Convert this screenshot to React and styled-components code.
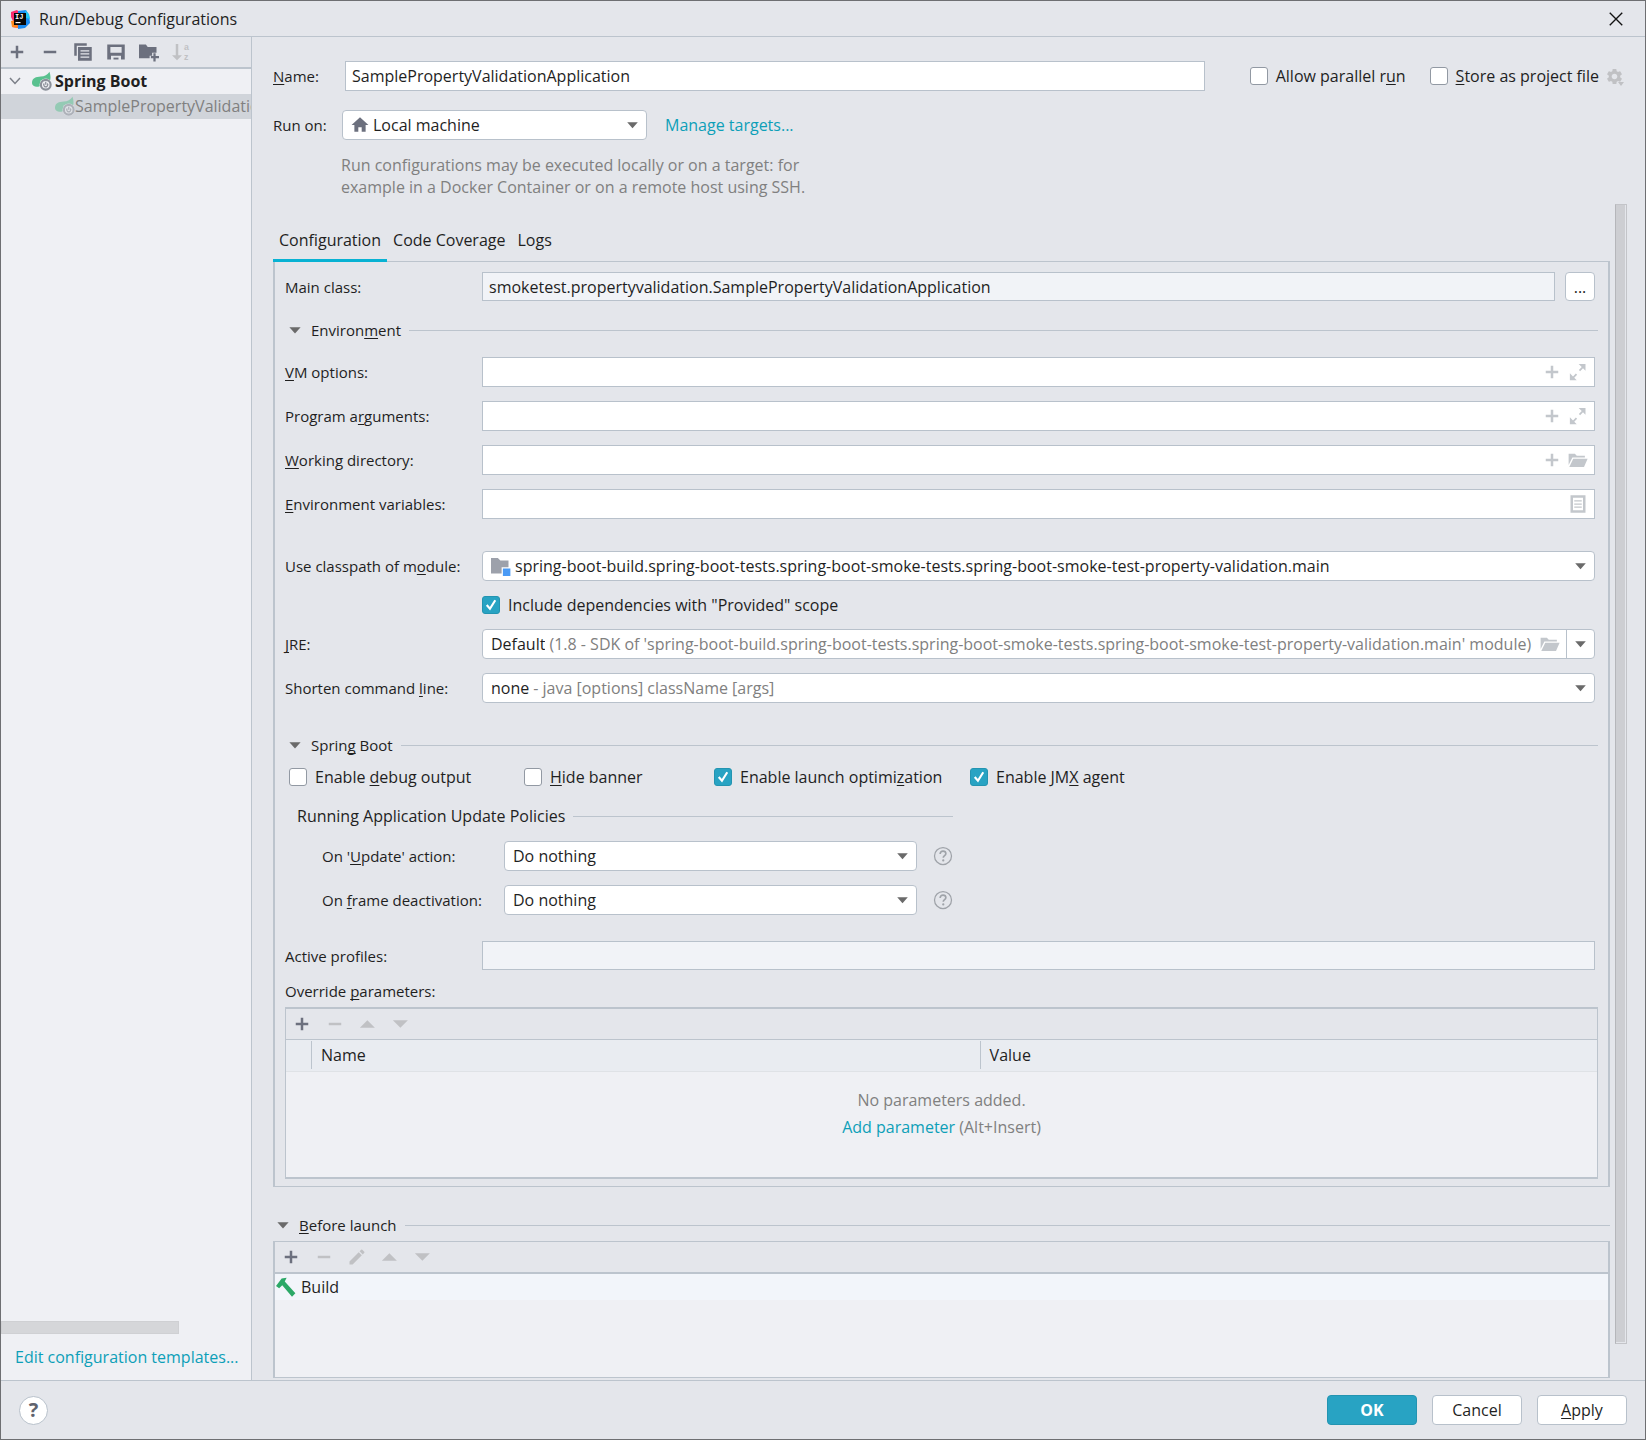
import React from 'react'
import styled, { createGlobalStyle, css } from 'styled-components'
import { MdEdit, MdSettings } from 'react-icons/md'

const GlobalStyle = createGlobalStyle`
* {
    box-sizing: border-box;
}
body {
    margin: 0;
    background-color: #e4e6eb;
    color: #1f1f1f;
    font-family: "Open Sans", "Noto Sans", sans-serif;
    font-size: 16px;
    line-height: 22px;
}
button, input, select {
    font: inherit;
    color: inherit;
}
u {
    text-decoration-thickness: 1px;
    text-underline-offset: 2px;
    text-decoration-skip-ink: none;
}
`

/* ---------- icons ---------- */

function Icon({ children, color = '#6c707e', size = 20 }) {
    return (
        <svg width={size} height={size} viewBox="0 0 16 16" fill={color} aria-hidden="true">
            {children}
        </svg>
    )
}

const GREY = '#c0c1c4'

const PlusIcon = ({ color }) => <Icon color={color}><path d="M7 3h2v4h4v2H9v4H7V9H3V7h4z" /></Icon>
const MinusIcon = ({ color }) => <Icon color={color}><path d="M3 7h10v2H3z" /></Icon>
const UpIcon = () => <Icon color={GREY}><path d="M1.500 11l6-6 6 6z" /></Icon>
const DownIcon = () => <Icon color={GREY}><path d="M1.500 5h12l-6 6z" /></Icon>
const ArrowIcon = () => <Icon color="#6a6a6a"><path d="M3 5.500h10l-5 5.500z" /></Icon>

const CopyIcon = () => (
    <Icon>
        <path d="M1 1h10v2H3v8H1z" />
        <path fillRule="evenodd" d="M4 4h11v11H4zM6 6.500v1h7v-1zM6 9v1h7V9zM6 11.500v1h7v-1z" />
    </Icon>
)

const SaveIcon = () => (
    <Icon>
        <path fillRule="evenodd" d="M1 2h14v12h-3v-3H4v3H1zM3.500 4v4.500h9V4z" />
        <path d="M6 12.500h4V14H6z" />
    </Icon>
)

const NewFolderIcon = () => (
    <Icon>
        <path d="M0 2h5.500l1.500 2h7v4.500h-3.500V11H8.500v2H0z" />
        <path d="M11.500 9h1.800v2.200h2.700v1.800h-2.700v2.500h-1.800V13H9.500v-1.800h2z" />
    </Icon>
)

const SortIcon = () => (
    <Icon color={GREY}>
        <path d="M3 1.500h2v9h3l-4 4-4-4h3z" />
        <text x="9.500" y="6.400" fontSize="7" fontWeight="700" fontFamily="Liberation Sans">a</text>
        <text x="9.500" y="14.400" fontSize="7" fontWeight="700" fontFamily="Liberation Sans">z</text>
    </Icon>
)

const ExpandIcon = () => (
    <Icon color="#c3c7cc">
        <path d="M8.500 1.500h5.500V7l-2-2-2.300 2.300-1-1L11 4zM1.500 9v5.500H7l-2-2 2.300-2.300-1-1L4 11.500z" />
    </Icon>
)

const OpenFolderIcon = () => (
    <Icon color="#c3c7cc">
        <path d="M.5 3h5L7 4.500h6.500V6h-10l-3 6z" />
        <path d="M4.200 7h11.500l-2.900 6.500H1z" />
    </Icon>
)

const ListIcon = () => (
    <Icon color="#c3c7cc">
        <path fillRule="evenodd" d="M2 1h12v14H2zM4 3v10h8V3z" />
        <path d="M5 5h6v1H5zM5 7.500h6v1H5zM5 10h6v1H5z" />
    </Icon>
)

const HomeIcon = () => (
    <Icon size={18}>
        <path d="M8 1l7.500 7H13v6H9.500v-4h-3v4H3V8H.5z" />
    </Icon>
)

const ModuleIcon = () => (
    <Icon color="#9da1ab">
        <path d="M0 1.500h5.500l2 2H14V9H8.500v5H0z" />
        <path d="M9.500 10h6v6h-6z" fill="#4a9af5" />
    </Icon>
)

const HammerIcon = () => (
    <Icon color="#2ba866">
        <path d="M0 7.200L4.500 1.200 8.500.5 7 3.500l8.500 9.500-2.700 2.800L5 6.500 2.500 9z" />
    </Icon>
)

const ChevronIcon = () => (
    <Icon color="none" size={16}>
        <path d="M3 5l5 5.500L13 5" stroke="#7b7f88" strokeWidth="1.500" />
    </Icon>
)

const CloseIcon = () => (
    <Icon color="none">
        <path d="M3 3l10 10M13 3L3 13" stroke="#111" strokeWidth="1.100" />
    </Icon>
)

const HelpIcon = () => (
    <Icon color="#9fa3a9">
        <circle cx="8" cy="8" r="6.800" fill="none" stroke="#9fa3a9" />
        <path d="M5.700 6.400c0-1.500 1-2.300 2.300-2.300s2.300.8 2.300 2.100c0 1.500-2.100 1.600-2.100 3.200" fill="none" stroke="#9fa3a9" strokeWidth="1.300" />
        <circle cx="8.200" cy="11.500" r=".9" />
    </Icon>
)

const SpringIcon = () => (
    <Icon>
        <path d="M14 .5c1.500 4.500 1 8.500-2 9.500l-7 2.500c-2.500.5-5.200-.5-5-3.200C0 5.500 3.300 4.500 7 4.300 10 4.200 12.500 3 14 .5z" fill="#59c18f" />
        <circle cx="11" cy="11" r="5" fill="#eff0f4" />
        <circle cx="11" cy="11" r="3.900" fill="none" stroke="#8b9099" strokeWidth="1.700" />
        <path d="M11 8.500V11M9.800 10a1.600 1.600 0 1 0 2.400 0" fill="none" stroke="#8b9099" />
    </Icon>
)

const AppIcon = () => (
    <svg width="20" height="20" viewBox="0 0 20 20" aria-hidden="true">
        <path d="M1 3l6-2 5 5-4 13-6-1 1-6-2-4z" fill="#fc2d6d" />
        <path d="M1 12l6-1 1 8-6-1z" fill="#ff8a1e" />
        <path d="M8 2l8-1 3 5 1 8-5 5-7 1z" fill="#1a8cf5" />
        <path d="M15 1l4 4 1 5-4-1z" fill="#21c8f6" />
        <path d="M4 4h12v12H4z" fill="#080808" />
        <text x="5" y="10" fontSize="7" fontWeight="700" fontFamily="Liberation Mono" fill="#fff">IJ</text>
        <path d="M5.500 13h5v1.200h-5z" fill="#fff" />
    </svg>
)

/* ---------- app ---------- */

function Check({ children, checked }) {
    return (
        <CheckLabel>
            <Checkbox type="checkbox" defaultChecked={checked} />
            <span>{children}</span>
        </CheckLabel>
    )
}

function Select({ id, value, icon, note, extra }) {
    return (
        <Combo>
            <Combo__value $inset={Boolean(extra)}>
                {icon}
                <Combo__select id={id} defaultValue={value} $fill={!note}>
                    <option>{value}</option>
                </Combo__select>
                {note && <Combo__note>{note}</Combo__note>}
                {extra}
            </Combo__value>
            <Combo__arrow $split={Boolean(extra)}><ArrowIcon /></Combo__arrow>
        </Combo>
    )
}

function TextField({ id, children }) {
    return (
        <Field>
            <Field__input id={id} type="text" />
            {children}
        </Field>
    )
}

function SectionTitle({ children, plain }) {
    return (
        <Section__title $plain={plain}>
            {!plain && <Section__toggle type="button" aria-label="Toggle section"><ArrowIcon /></Section__toggle>}
            <span>{children}</span>
            <Section__line />
        </Section__title>
    )
}

function Sidebar() {
    return (
        <Side>
            <Toolbar>
                <ToolButton aria-label="Add"><PlusIcon /></ToolButton>
                <ToolButton aria-label="Remove"><MinusIcon /></ToolButton>
                <ToolButton aria-label="Copy"><CopyIcon /></ToolButton>
                <ToolButton aria-label="Save"><SaveIcon /></ToolButton>
                <ToolButton aria-label="New folder"><NewFolderIcon /></ToolButton>
                <ToolButton aria-label="Sort" disabled><SortIcon /></ToolButton>
            </Toolbar>
            <Tree>
                <Tree__group>
                    <ChevronIcon />
                    <SpringIcon />
                    Spring Boot
                </Tree__group>
                <Tree__item>
                    <SpringIcon />
                    <span>SamplePropertyValidationApplication</span>
                </Tree__item>
            </Tree>
            <Side__scroll />
            <Side__footer>
                <Link href="#templates">Edit configuration templates...</Link>
            </Side__footer>
        </Side>
    )
}

function Header() {
    return (
        <Head>
            <Head__row>
                <Head__label htmlFor="name" $width={72}><u>N</u>ame:</Head__label>
                <Head__name id="name" type="text" defaultValue="SamplePropertyValidationApplication" />
                <Head__options>
                    <Check>Allow parallel r<u>u</u>n</Check>
                    <Head__store>
                        <Check><u>S</u>tore as project file</Check>
                        <GearButton type="button" aria-label="Storage settings">
                            <MdSettings size={19} />
                            <svg width="6" height="4" viewBox="0 0 6 4"><path d="M0 0h6L3 4z" fill="currentColor" /></svg>
                        </GearButton>
                    </Head__store>
                </Head__options>
            </Head__row>
            <Head__row>
                <Head__label htmlFor="target" $width={69}>Run on:</Head__label>
                <Head__target>
                    <Select id="target" value="Local machine" icon={<HomeIcon />} />
                </Head__target>
                <Link href="#targets">Manage targets...</Link>
            </Head__row>
            <Head__hint>
                Run configurations may be executed locally or on a target: for
                <br />
                example in a Docker Container or on a remote host using SSH.
            </Head__hint>
        </Head>
    )
}

function Configuration() {
    return (
        <Panel>
            <Row>
                <Label htmlFor="main">Main class:</Label>
                <Readonly id="main" type="text" readOnly value="smoketest.propertyvalidation.SamplePropertyValidationApplication" />
                <Browse type="button">...</Browse>
            </Row>

            <Section $top={18} $gap={16}>
                <SectionTitle>Environ<u>m</u>ent</SectionTitle>
                <Fields>
                    <Row>
                        <Label htmlFor="vm"><u>V</u>M options:</Label>
                        <TextField id="vm"><PlusIcon color="#c3c7cc" /><ExpandIcon /></TextField>
                    </Row>
                    <Row>
                        <Label htmlFor="args">Program a<u>r</u>guments:</Label>
                        <TextField id="args"><PlusIcon color="#c3c7cc" /><ExpandIcon /></TextField>
                    </Row>
                    <Row>
                        <Label htmlFor="dir"><u>W</u>orking directory:</Label>
                        <TextField id="dir"><PlusIcon color="#c3c7cc" /><OpenFolderIcon /></TextField>
                    </Row>
                    <Row>
                        <Label htmlFor="env"><u>E</u>nvironment variables:</Label>
                        <TextField id="env"><ListIcon /></TextField>
                    </Row>
                </Fields>
                <Fields $top={16}>
                    <Row>
                        <Label htmlFor="module">Use classpath of m<u>o</u>dule:</Label>
                        <Select
                            id="module"
                            icon={<ModuleIcon />}
                            value="spring-boot-build.spring-boot-tests.spring-boot-smoke-tests.spring-boot-smoke-test-property-validation.main"
                        />
                    </Row>
                    <Row>
                        <Label as="span" />
                        <Check checked>Include dependencies with "Provided" scope</Check>
                    </Row>
                    <Row>
                        <Label htmlFor="jre"><u>J</u>RE:</Label>
                        <Select
                            id="jre"
                            value="Default"
                            note="(1.8 - SDK of 'spring-boot-build.spring-boot-tests.spring-boot-smoke-tests.spring-boot-smoke-test-property-validation.main' module)"
                            extra={<OpenFolderIcon />}
                        />
                    </Row>
                    <Row>
                        <Label htmlFor="shorten">Shorten command <u>l</u>ine:</Label>
                        <Select id="shorten" value="none" note="- java [options] className [args]" />
                    </Row>
                </Fields>
            </Section>

            <Section $top={31} $gap={11}>
                <SectionTitle>Sprin<u>g</u> Boot</SectionTitle>
                <Flags>
                    <Check>Enable <u>d</u>ebug output</Check>
                    <Check><u>H</u>ide banner</Check>
                    <Check checked>Enable launch optimi<u>z</u>ation</Check>
                    <Check checked>Enable JM<u>X</u> agent</Check>
                </Flags>
                <Policies>
                    <SectionTitle plain>Running Application Update Policies</SectionTitle>
                    <Policies__row>
                        <Label htmlFor="onupdate">On '<u>U</u>pdate' action:</Label>
                        <Select id="onupdate" value="Do nothing" />
                        <HelpIcon />
                    </Policies__row>
                    <Policies__row>
                        <Label htmlFor="onframe">On <u>f</u>rame deactivation:</Label>
                        <Select id="onframe" value="Do nothing" />
                        <HelpIcon />
                    </Policies__row>
                </Policies>
            </Section>

            <Profiles>
                <Label htmlFor="profiles">Active profiles:</Label>
                <Readonly id="profiles" type="text" readOnly value="" />
            </Profiles>

            <Override>
                <Label as="span" id="override">Override <u>p</u>arameters:</Label>
                <Override__box>
                    <Toolbar>
                        <ToolButton aria-label="Add"><PlusIcon /></ToolButton>
                        <ToolButton aria-label="Remove" disabled><MinusIcon color={GREY} /></ToolButton>
                        <ToolButton aria-label="Move up" disabled><UpIcon /></ToolButton>
                        <ToolButton aria-label="Move down" disabled><DownIcon /></ToolButton>
                    </Toolbar>
                    <Params aria-labelledby="override">
                        <colgroup>
                            <col width="25" />
                            <col width="51%" />
                            <col />
                        </colgroup>
                        <thead>
                            <tr>
                                <th />
                                <th><span>Name</span></th>
                                <th><span>Value</span></th>
                            </tr>
                        </thead>
                        <tbody>
                            <tr>
                                <td colSpan="3">
                                    <p>No parameters added.</p>
                                    <p><Link href="#add">Add parameter</Link> (Alt+Insert)</p>
                                </td>
                            </tr>
                        </tbody>
                    </Params>
                </Override__box>
            </Override>
        </Panel>
    )
}

function BeforeLaunch() {
    return (
        <Before>
            <SectionTitle><u>B</u>efore launch</SectionTitle>
            <Before__box>
                <Toolbar>
                    <ToolButton aria-label="Add"><PlusIcon /></ToolButton>
                    <ToolButton aria-label="Remove" disabled><MinusIcon color={GREY} /></ToolButton>
                    <ToolButton aria-label="Edit" disabled><MdEdit size={22} color={GREY} /></ToolButton>
                    <ToolButton aria-label="Move up" disabled><UpIcon /></ToolButton>
                    <ToolButton aria-label="Move down" disabled><DownIcon /></ToolButton>
                </Toolbar>
                <Task>
                    <HammerIcon />
                    Build
                </Task>
            </Before__box>
        </Before>
    )
}

function App() {
    return (
        <Window>
            <GlobalStyle />
            <TitleBar>
                <AppIcon />
                <TitleBar__text>Run/Debug Configurations</TitleBar__text>
                <CloseButton type="button" aria-label="Close"><CloseIcon /></CloseButton>
            </TitleBar>
            <Body>
                <Sidebar />
                <Main>
                    <Header />
                    <Scroll>
                        <Scroll__content>
                            <Tabs role="tablist">
                                <Tab type="button" role="tab" $active>Configuration</Tab>
                                <Tab type="button" role="tab">Code Coverage</Tab>
                                <Tab type="button" role="tab">Logs</Tab>
                            </Tabs>
                            <Configuration />
                            <BeforeLaunch />
                        </Scroll__content>
                        <Scroll__bar />
                    </Scroll>
                </Main>
            </Body>
            <Footer>
                <HelpButton type="button" aria-label="Help">?</HelpButton>
                <Button type="button" $primary>OK</Button>
                <Button type="button">Cancel</Button>
                <Button type="button"><u>A</u>pply</Button>
            </Footer>
        </Window>
    )
}

export default App

const Window = styled.div`
display: flex;
flex-direction: column;
min-height: 100vh;
border: 1px solid #6e6f72;
`

const TitleBar = styled.header`
display: flex;
align-items: center;
height: 36px;
padding: 0 19px 0 9px;
border-bottom: 1px solid #bcc4cd;
`

const TitleBar__text = styled.h1`
flex: 1;
margin: 0 0 0 9px;
font-size: 16px;
font-weight: 400;
`

const CloseButton = styled.button`
display: flex;
padding: 0;
border: 0;
background: none;
`

const Body = styled.div`
display: flex;
flex: 1;
`

const Link = styled.a`
color: #0d9fb8;
text-decoration: none;
`

/* sidebar */

const Side = styled.aside`
display: flex;
flex-direction: column;
flex-shrink: 0;
width: 251px;
border-right: 1px solid #bcc4cd;
background-color: #eff0f4;
`

const Toolbar = styled.div`
display: flex;
align-items: center;
gap: 13px;
height: 32px;
padding: 0 6px;
border-bottom: 2px solid #bcc4cd;
background-color: #e4e6eb;
`

const ToolButton = styled.button.attrs({ type: 'button' })`
display: flex;
align-items: center;
justify-content: center;
width: 20px;
height: 20px;
padding: 0;
border: 0;
background: none;
`

const Tree = styled.div`
flex: 1;
overflow: hidden;
white-space: nowrap;
`

const Tree__group = styled.div`
display: flex;
align-items: center;
height: 25px;
padding: 0 0 2px 6px;
font-weight: 700;

svg + svg {
    margin: 0 3px 0 9px;
}
`

const Tree__item = styled.div`
display: flex;
align-items: center;
height: 25px;
padding: 0 0 2px 54px;
background-color: #d0d4da;
color: #808080;

svg {
    flex-shrink: 0;
    opacity: 0.5;
}
`

const Side__scroll = styled.div`
width: 71%;
height: 13px;
border: 1px solid #cfd0d3;
background-color: #d5d6d9;
`

const Side__footer = styled.div`
padding: 12px 0 12px 14px;
white-space: nowrap;
`

/* form header */

const Main = styled.main`
display: flex;
flex: 1;
flex-direction: column;
min-width: 0;
padding: 24px 18px 2px 21px;
`

const Head = styled.div`
display: flex;
flex-direction: column;
gap: 19px;
`

const Head__row = styled.div`
display: flex;
align-items: center;
`

const Head__label = styled.label`
flex-shrink: 0;
width: ${(props) => props.$width}px;
font-size: 15px;
`

const inputBox = css`
min-width: 0;
height: 30px;
padding: 0 6px;
border: 1px solid #b8c1cb;
background-color: #fff;
outline: 0;
`

const Head__name = styled.input`
${inputBox}
flex: 1;
`

const Head__options = styled.div`
display: flex;
gap: 24px;
margin-left: 45px;
padding-right: 3px;
`

const Head__store = styled.div`
display: flex;
align-items: center;
gap: 6px;
`

const GearButton = styled.button`
position: relative;
display: flex;
padding: 0;
border: 0;
background: none;
color: ${GREY};

svg + svg {
    position: absolute;
    right: 0;
    bottom: 0;
}
`

const Head__target = styled.div`
display: flex;
width: 305px;
margin-right: 18px;
`

const Head__hint = styled.p`
margin: -5px 0 0 68px;
color: #808080;
`

/* controls */

const Combo = styled.div`
display: flex;
flex: 1;
min-width: 0;
height: 30px;
border: 1px solid #b8c1cb;
border-radius: 4px;
background-color: #fff;
`

const Combo__value = styled.div`
display: flex;
align-items: center;
flex: 1;
gap: 4px;
min-width: 0;
padding: 0 ${(props) => (props.$inset ? 6 : 0)}px 0 8px;

svg {
    flex-shrink: 0;
}
`

const Combo__select = styled.select`
flex: ${(props) => (props.$fill ? '1' : 'none')};
min-width: 0;
padding: 0;
border: 0;
background: none;
appearance: none;
field-sizing: content;
outline: 0;
`

const Combo__note = styled.span`
flex: 1;
color: #808080;
white-space: nowrap;
`

const Combo__arrow = styled.span`
display: flex;
align-items: center;
justify-content: center;
width: 28px;
border-left: ${(props) => (props.$split ? '1px solid #b8c1cb' : '0')};

svg {
    width: 17px;
}
`

const CheckLabel = styled.label`
display: flex;
align-items: center;
gap: 8px;
height: 20px;
white-space: nowrap;
`

const Checkbox = styled.input`
flex-shrink: 0;
width: 18px;
height: 18px;
margin: 0;
border: 1px solid #9299a3;
border-radius: 3px;
background: #fff center / 16px no-repeat;
appearance: none;

&:checked {
    border-color: #2394b1;
    background-color: #28a3c3;
    background-image: url("data:image/svg+xml,%3Csvg xmlns='http://www.w3.org/2000/svg' viewBox='0 0 15 15'%3E%3Cpath d='M3.500 7.500l3 3.500 5-8' fill='none' stroke='white' stroke-width='2'/%3E%3C/svg%3E");
}
`

const Field = styled.div`
${inputBox}
display: flex;
align-items: center;
flex: 1;
gap: 6px;
`

const Field__input = styled.input`
flex: 1;
min-width: 0;
height: 28px;
padding: 0;
border: 0;
background: none;
outline: 0;
`

const Readonly = styled.input`
${inputBox}
flex: 1;
height: 29px;
background-color: #f1f3f7;
`

const Browse = styled.button`
width: 30px;
height: 29px;
margin-left: 10px;
padding: 0;
border: 1px solid #b8c1cb;
border-radius: 4px;
background-color: #fff;
`

/* tabs and panel */

const Scroll = styled.div`
display: flex;
flex: 1;
gap: 5px;
margin-top: 6px;
`

const Scroll__content = styled.div`
display: flex;
flex: 1;
flex-direction: column;
min-width: 0;
`

const Scroll__bar = styled.div`
width: 12px;
margin-bottom: 34px;
border: 1px solid #c3c4c8;
border-left-color: #b5b6ba;
background-color: #cdced2;
box-shadow: inset -1px -1px #e4e6eb;
`

const Tabs = styled.div`
position: relative;
display: flex;
height: 58px;
margin-bottom: -1px;
padding-top: 17px;
`

const Tab = styled.button`
padding: 0 6px;
border: 0;
border-bottom: 3px solid ${(props) => (props.$active ? '#08b2d3' : 'transparent')};
background: none;
`

const Panel = styled.section`
padding: 10px 10px 7px;
border: solid #bcc4cd;
border-width: 1px 2px;
`

const Row = styled.div`
display: flex;
align-items: center;
padding-right: 3px;
`

const Label = styled.label`
flex-shrink: 0;
width: 197px;
font-size: 15px;
`

const Section = styled.div`
display: flex;
flex-direction: column;
gap: ${(props) => props.$gap}px;
margin-top: ${(props) => props.$top}px;
`

const Section__title = styled.div`
display: flex;
align-items: center;
font-size: ${(props) => (props.$plain ? 16 : 15)}px;
`

const Section__toggle = styled.button`
display: flex;
width: 26px;
padding: 0 0 0 1px;
border: 0;
background: none;

svg {
    width: 18px;
}
`

const Section__line = styled.span`
flex: 1;
height: 1px;
margin-left: 8px;
background-color: #bcc4cd;
`

const Fields = styled.div`
display: flex;
flex-direction: column;
gap: 14px;
margin-top: ${(props) => props.$top || 0}px;
`

const Flags = styled.div`
display: grid;
grid-template-columns: 235px 190px 256px 1fr;
padding-left: 4px;
`

const Policies = styled.div`
display: flex;
flex-direction: column;
gap: 14px;
width: 668px;
padding: 7px 0 0 12px;
`

const Policies__row = styled.div`
display: grid;
grid-template-columns: 182px 1fr 36px;
align-items: center;
padding-left: 25px;

${Label} {
    width: auto;
}

> svg {
    justify-self: end;
}
`

const Profiles = styled(Row)`
margin-top: 26px;
`

const Override = styled.div`
display: flex;
flex-direction: column;
gap: 5px;
margin-top: 10px;
`

const Override__box = styled.div`
border: solid #bcc4cd;
border-width: 2px 1px;

${Toolbar} {
    height: 31px;
    border-bottom-width: 1px;
}
`

const Params = styled.table`
width: 100%;
border-collapse: collapse;
table-layout: fixed;
background-color: #eff0f4;

th {
    height: 31px;
    padding: 1px 0;
    border-bottom: 1px solid #dfe2e6;
    background-color: #e9ecf1;
    font-weight: 400;
    text-align: left;
}
th span {
    display: block;
    padding: 3px 9px;
    border-left: 1px solid #bcc4cd;
}
td {
    height: 106px;
    padding: 14px 0 0;
    color: #808080;
    text-align: center;
    vertical-align: top;
}
p {
    margin: 3px 0 5px;
}
`

/* before launch */

const Before = styled.section`
display: flex;
flex: 1;
flex-direction: column;
gap: 5px;
margin-top: 27px;
`

const Before__box = styled.div`
flex: 1;
border: solid #bcc4cd;
border-width: 1px 2px;
background-color: #eff0f4;
`

const Task = styled.div`
display: flex;
align-items: center;
gap: 5px;
height: 26px;
padding-left: 1px;
background-color: #f2f5fa;
`

/* footer */

const Footer = styled.footer`
display: flex;
align-items: center;
gap: 15px;
height: 59px;
padding: 0 18px;
border-top: 1px solid #bcc4cd;
`

const HelpButton = styled.button`
width: 29px;
height: 29px;
margin-right: auto;
padding: 0;
border: 1px solid #b8c1cb;
border-radius: 50%;
background-color: #fff;
color: #5f636e;
font-size: 20px;
font-weight: 700;
`

const Button = styled.button`
width: 90px;
height: 30px;
padding: 0;
border: 1px solid ${(props) => (props.$primary ? '#2394b1' : '#b8c1cb')};
border-radius: 4px;
background-color: ${(props) => (props.$primary ? '#28a3c3' : '#fff')};
color: ${(props) => (props.$primary ? '#fff' : '#1f1f1f')};
font-weight: ${(props) => (props.$primary ? '700' : '400')};
`
